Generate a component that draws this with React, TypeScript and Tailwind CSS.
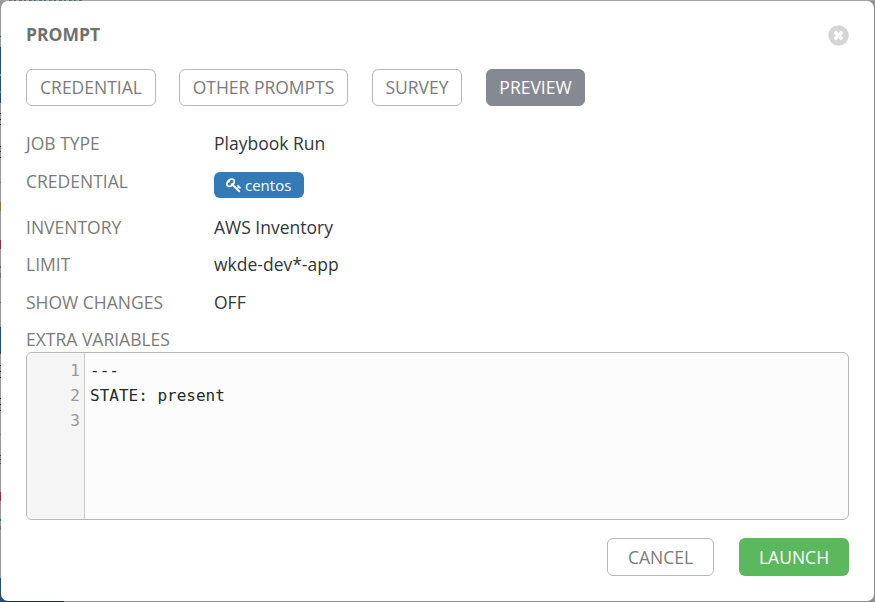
import type { ReactNode } from 'react';

// Visible sliver of the dimmed page along the left edge: [height, colour]
const EDGE: [number, string][] = [
  [36, '#979797'], [1, '#2b5f8c'], [10, '#979797'], [27, '#1f4e79'], [2, '#8b9399'],
  [15, '#1f4e79'], [2, '#53788f'], [10, '#1f4e79'], [10, '#979797'], [1, '#222'],
  [5, '#8e8e8e'], [1, '#222'], [4, '#8e8e8e'], [1, '#222'], [21, '#979797'], [1, '#222'],
  [4, '#8e8e8e'], [1, '#222'], [5, '#8e8e8e'], [1, '#222'], [24, '#979797'], [1, '#777'],
  [19, '#979797'], [9, '#95703f'], [29, '#979797'], [9, '#9c2f2b'], [17, '#979797'],
  [2, '#43708f'], [5, '#979797'], [5, '#6d6d93'], [24, '#979797'], [1, '#43708f'],
  [24, '#979797'], [27, '#1f4e79'], [11, '#979797'], [1, '#222'], [5, '#8e8e8e'], [1, '#222'],
  [5, '#8e8e8e'], [1, '#222'], [20, '#979797'], [1, '#222'], [5, '#8e8e8e'], [1, '#222'],
  [5, '#8e8e8e'], [1, '#222'], [23, '#979797'], [1, '#777'], [20, '#979797'], [1, '#444'],
  [3, '#8e8e8e'], [1, '#444'], [3, '#8e8e8e'], [1, '#444'], [28, '#979797'], [9, '#9c2f2b'],
  [18, '#979797'], [2, '#43708f'], [5, '#979797'], [4, '#6d6d93'], [48, '#979797'], [30, '#1f4e79'],
];

function Tab({ children, className = '' }: { children: ReactNode; className?: string }) {
  return (
    <button className={`box-border h-[37px] rounded-[6px] border whitespace-nowrap leading-[35px] ${className}`}>
      {children}
    </button>
  );
}

function Row({ label, children, className = '' }: { label: string; children: ReactNode; className?: string }) {
  return (
    <div className={`flex items-start ${className}`}>
      <div className="w-[188px] shrink-0 text-[#7b7b7b]">{label}</div>
      <div className="text-[#31363b]">{children}</div>
    </div>
  );
}

function KeyIcon() {
  return (
    <svg className="mr-[3px] h-[16px] w-[16px]" viewBox="0 0 1792 1792" fill="white">
      <path d="M832 512q0-80-56-136t-136-56-136 56-56 136q0 42 19 83-41-19-83-19-80 0-136 56t-56 136 56 136 136 56 136-56 56-136q0-42-19-83 41 19 83 19 80 0 136-56t56-136zm851 704q0 17-49 66t-66 49q-9 0-28.5-16t-36.5-33-38.5-40-24.5-26l-96 96 220 220q28 28 28 68 0 42-39 81t-81 39q-40 0-68-28l-671-671q-176 131-365 131-163 0-265.5-102.5t-102.5-265.5q0-160 95-313t248-248 313-95q163 0 265.5 102.5t102.5 265.5q0 189-131 365l355 355 96-96q-3-3-26-24.5t-40-38.5-33-36.5-16-28.5q0-17 49-66t66-49q13 0 23 10 6 6 46 44.5t82 79.5 86.5 86 73 78 28.5 41z" />
    </svg>
  );
}

export default function App() {
  return (
    <div className="relative h-[602px] w-[875px] overflow-hidden bg-[#8f8f8f] font-['Open_Sans','Noto_Sans',sans-serif] text-[17.5px] font-normal leading-[25px] text-[#7b7b7b]">
      <div className="flex w-[6px] flex-col">
        {EDGE.map(([height, background], i) => (
          <div key={i} className="shrink-0" style={{ height, background }} />
        ))}
      </div>
      <div className="absolute top-0 left-0 flex h-px w-full items-start bg-[#a5a5a5]">
        <div className="ml-[9px] h-px w-[74px] bg-[repeating-linear-gradient(90deg,#55728b_0_3px,#a5a5a5_3px_5px,#426b8f_5px_7px,#a5a5a5_7px_10px)]" />
      </div>
      <div className="absolute bottom-0 left-0 h-[6px] w-[64px] bg-[linear-gradient(90deg,#1f4e79_6px,#17304a_6px)]" />

      <section className="absolute inset-px flex flex-col rounded-[7px] bg-white px-[25px]">
        <header className="mt-[21px] flex h-[25px] items-center justify-between">
          <h1 className="font-bold text-[#707070]">PROMPT</h1>
          <svg className="mt-[2px] h-[21px] w-[21px]" viewBox="0 0 21 21">
            <circle cx="10.5" cy="10.5" r="10.2" fill="#d5d5d5" />
            <path d="M6.7 6.7 L14.3 14.3 M14.3 6.7 L6.7 14.3" stroke="white" strokeWidth="3.4" />
          </svg>
        </header>

        <nav className="mt-[22px] flex">
          <Tab className="w-[130px] border-[#b7b7b7]">CREDENTIAL</Tab>
          <Tab className="ml-[23px] w-[169px] border-[#b7b7b7]">OTHER PROMPTS</Tab>
          <Tab className="ml-[24px] w-[90px] border-[#b7b7b7]">SURVEY</Tab>
          <Tab className="ml-[24px] w-[99px] border-[#848992] bg-[#848992] text-white">PREVIEW</Tab>
        </nav>

        <div className="mt-[25px] flex flex-col">
          <Row label="JOB TYPE" className="h-[38px]">Playbook Run</Row>
          <Row label="CREDENTIAL" className="h-[46px]">
            <div className="mt-[3px] flex h-[26px] w-[90px] items-center rounded-[6px] bg-[#337ab7] pl-[12px] text-[15px] leading-[26px] text-white">
              <KeyIcon />
              centos
            </div>
          </Row>
          <Row label="INVENTORY" className="h-[37px]">AWS Inventory</Row>
          <Row label="LIMIT" className="h-[38px]">wkde-dev*-app</Row>
          <Row label="SHOW CHANGES" className="h-[37px]">OFF</Row>
        </div>

        <div>EXTRA VARIABLES</div>
        <div className="flex h-[168px] overflow-hidden rounded-[6px] border border-[#b7b7b7] bg-[#fcfcfc] font-['DejaVu_Sans_Mono',monospace] text-[16px]">
          <div className="w-[58px] border-r border-[#cccccc] bg-[#f5f5f5] pt-[5px] pr-[4px] text-right text-[#999999]">
            <div>1</div>
            <div>2</div>
            <div>3</div>
          </div>
          <div className="pt-[5px] pl-[5px] whitespace-pre text-[#24292d]">
            <div>---</div>
            <div>STATE: present</div>
          </div>
        </div>

        <footer className="mt-[18px] flex justify-end gap-[25px]">
          <button className="h-[38px] w-[107px] rounded-[6px] border border-[#b7b7b7]">CANCEL</button>
          <button className="h-[38px] w-[110px] rounded-[6px] bg-[#5cb85c] text-white">LAUNCH</button>
        </footer>
      </section>
    </div>
  );
}
